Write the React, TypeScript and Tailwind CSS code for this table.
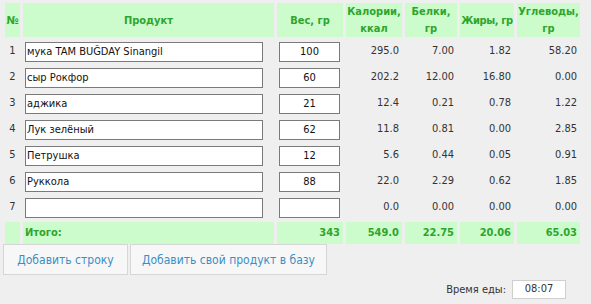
import React from "react";

const rows = [
  { n: 1, name: "мука TAM BUĞDAY Sinangil", w: "100", k: "295.0", b: "7.00", j: "1.82", u: "58.20" },
  { n: 2, name: "сыр Рокфор", w: "60", k: "202.2", b: "12.00", j: "16.80", u: "0.00" },
  { n: 3, name: "аджика", w: "21", k: "12.4", b: "0.21", j: "0.78", u: "1.22" },
  { n: 4, name: "Лук зелёный", w: "62", k: "11.8", b: "0.81", j: "0.00", u: "2.85" },
  { n: 5, name: "Петрушка", w: "12", k: "5.6", b: "0.44", j: "0.05", u: "0.91" },
  { n: 6, name: "Руккола", w: "88", k: "22.0", b: "2.29", j: "0.62", u: "1.85" },
  { n: 7, name: "", w: "", k: "0.0", b: "0.00", j: "0.00", u: "0.00" },
];

const FONT = '"DejaVu Sans Condensed", "DejaVu Sans", sans-serif';

const th = "bg-[#ccfccc] text-[#2ea52e] font-bold text-[11px] leading-[17px] text-center align-middle p-0 whitespace-nowrap";
const num = "text-right pr-[3px] text-[11px] text-[#333] align-middle p-0";
const tot = "bg-[#ccfccc] text-[#2ea52e] font-bold text-[11px] text-right pr-[3px] align-middle p-0";

export default function App() {
  return (
    <div className="w-[591px] h-[304px] bg-[#efefef] overflow-hidden" style={{ fontFamily: FONT }}>
      <table className="border-separate border-spacing-[3px] ml-[2px] table-fixed w-[581px]">
        <colgroup>
          <col className="w-[15px]" />
          <col className="w-[251px]" />
          <col className="w-[66px]" />
          <col className="w-[56px]" />
          <col className="w-[52px]" />
          <col className="w-[54px]" />
          <col className="w-[63px]" />
        </colgroup>
        <thead>
          <tr className="h-[34px]">
            <th className={th}>№</th>
            <th className={th}>Продукт</th>
            <th className={th}>Вес, гр</th>
            <th className={th}>Калории,<br />ккал</th>
            <th className={th}>Белки,<br />гр</th>
            <th className={`${th} tracking-[-0.4px]`}>Жиры, гр</th>
            <th className={th}>Углеводы,<br />гр</th>
          </tr>
        </thead>
        <tbody>
          {rows.map((r) => (
            <tr key={r.n} className="h-[23px]">
              <td className="text-center text-[11px] text-[#333] align-middle p-0">{r.n}</td>
              <td className="p-0 align-middle">
                <input
                  readOnly
                  value={r.name}
                  className="block ml-[2px] w-[238px] h-[20px] border border-[#7a7a7a] bg-white px-[1px] text-[11px] text-[#111] outline-none"
                  style={{ fontFamily: FONT }}
                />
              </td>
              <td className="p-0 align-middle">
                <input
                  readOnly
                  value={r.w}
                  className="block ml-[2px] w-[61px] h-[20px] border border-[#7a7a7a] bg-white text-center text-[11px] text-[#111] outline-none"
                  style={{ fontFamily: FONT }}
                />
              </td>
              <td className={num}>{r.k}</td>
              <td className={num}>{r.b}</td>
              <td className={num}>{r.j}</td>
              <td className={num}>{r.u}</td>
            </tr>
          ))}
          <tr className="h-[22px]">
            <td className="bg-[#ccfccc] p-0"></td>
            <td className="bg-[#ccfccc] text-[#2ea52e] font-bold text-[11px] text-left pl-[2px] align-middle p-0">Итого:</td>
            <td className={tot}>343</td>
            <td className={tot}>549.0</td>
            <td className={tot}>22.75</td>
            <td className={tot}>20.06</td>
            <td className={tot}>65.03</td>
          </tr>
        </tbody>
      </table>
      <div className="flex gap-[2px] ml-[3px] -mt-[3px]">
        <div className="w-[125px] h-[31px] border border-[#d6d6d6] bg-[#f7f7f7] flex items-center justify-center text-[12px] text-[#3a8fc4]">
          Добавить строку
        </div>
        <div className="w-[197px] h-[31px] border border-[#d6d6d6] bg-[#f7f7f7] flex items-center justify-center text-[12px] text-[#3a8fc4]">
          Добавить свой продукт в базу
        </div>
      </div>
      <div className="flex items-center justify-end mt-[5px] mr-[25px] gap-[6px]">
        <span className="text-[11px] text-[#333] pt-[2px]">Время еды:</span>
        <div className="w-[54px] h-[19px] border border-[#cfcfcf] bg-white flex items-center justify-center text-[11px] text-[#333]">
          08:07
        </div>
      </div>
    </div>
  );
}
